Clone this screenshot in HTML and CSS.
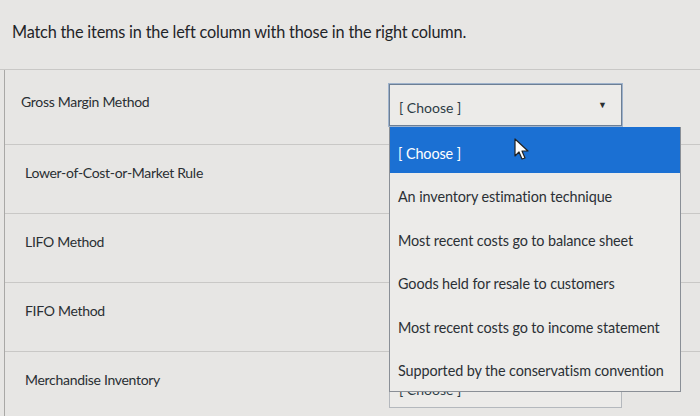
FILE: index.html
```html
<!DOCTYPE html>
<html lang="en">

<head>
  <meta charset="UTF-8">
  <meta name="viewport" content="width=device-width, initial-scale=1.0">
  <link rel="stylesheet" href="styles.css">
  <title>Matching question</title>
</head>

<body>
  <div class="question">
    <p class="question-text">Match the items in the left column with those in the right column.</p>

    <div class="answers">
      <div class="answer-row first">
        <span class="answer-label">Gross Margin Method</span>
        <div class="select focused">
          <span>[ Choose ]</span>
          <span class="caret">&#9660;</span>
        </div>
      </div>
      <div class="answer-row">
        <span class="answer-label">Lower-of-Cost-or-Market Rule</span>
        <div class="select covered"><span>[ Choose ]</span><span class="caret">&#9660;</span></div>
      </div>
      <div class="answer-row">
        <span class="answer-label">LIFO Method</span>
        <div class="select covered"><span>[ Choose ]</span><span class="caret">&#9660;</span></div>
      </div>
      <div class="answer-row">
        <span class="answer-label">FIFO Method</span>
        <div class="select covered"><span>[ Choose ]</span><span class="caret">&#9660;</span></div>
      </div>
      <div class="answer-row last">
        <span class="answer-label">Merchandise Inventory</span>
        <div class="select"><span>[ Choose ]</span><span class="caret">&#9660;</span></div>
      </div>
    </div>

    <!-- open menu of the first select -->
    <ul class="options">
      <li class="active">[ Choose ]</li>
      <li>An inventory estimation technique</li>
      <li>Most recent costs go to balance sheet</li>
      <li>Goods held for resale to customers</li>
      <li>Most recent costs go to income statement</li>
      <li>Supported by the conservatism convention</li>
    </ul>

    <svg class="pointer" width="16" height="24" viewBox="0 0 16 24">
      <path d="M1 1 L1 18 L5 14 L8 21 L11 20 L8 13 L14 13 Z" fill="#fff" stroke="#222" stroke-width="1.2" stroke-linejoin="round" />
    </svg>
  </div>
</body>

</html>
```

FILE: styles.css
```css
* {
  margin: 0;
  padding: 0;
  box-sizing: border-box;
}

body {
  font-family: Lato, 'Noto Sans', sans-serif;
  color: #2d3b45;
  background: #e7e6e4;
  height: 416px;
  overflow: hidden;
}

.question {
  position: relative;
  height: 416px;
}

.question-text {
  padding: 22px 0 0 12px;
  height: 70px;
  font-size: 16.3px;
  letter-spacing: -0.2px;
  color: #1f2428;
  border-bottom: 1px solid #c9c8c6;
}

.answers {
  margin-left: 4px;
  border-left: 1px solid #a9a8a6;
}

.answer-row {
  display: flex;
  justify-content: space-between;
  height: 69px;
  padding: 14px 0 0 20px;
  border-bottom: 1px solid #c9c8c6;
}

.answer-row.first {
  height: 75px;
  padding-left: 16px;
}

.answer-row.last {
  border-bottom: none;
}

.answer-label {
  font-size: 14px;
  letter-spacing: -0.3px;
  padding-top: 5px;
  color: #2a2f33;
}

.answer-row.first .answer-label {
  padding-top: 9px;
}

.select {
  width: 233px;
  height: 42px;
  margin-right: 78px;
  display: flex;
  align-items: center;
  justify-content: space-between;
  padding: 4px 14px 0 9px;
  font-size: 14px;
  color: #2d3b45;
  border: 1px solid #b4b8bd;
  background: #ecebe9;
}

.select.focused {
  border-color: #6d7f95;
  box-shadow: 0 0 0 1px #9fb3cc;
}

.select.covered {
  visibility: hidden;
}

.caret {
  font-size: 9px;
  color: #2b2f33;
  padding-bottom: 6px;
}

.options {
  position: absolute;
  left: 389px;
  top: 127px;
  width: 292px;
  list-style: none;
  background: #ecebe9;
  border: 1px solid #8a8f96;
  border-top: none;
}

.options li {
  height: 43.5px;
  display: flex;
  align-items: center;
  padding: 4px 0 0 8px;
  font-size: 14.4px;
  letter-spacing: -0.1px;
  color: #2b3035;
}

.options li.active {
  height: 46px;
  padding-top: 6px;
  background: #1b70d3;
  color: #fff;
}

.pointer {
  position: absolute;
  left: 514px;
  top: 138px;
}
```
